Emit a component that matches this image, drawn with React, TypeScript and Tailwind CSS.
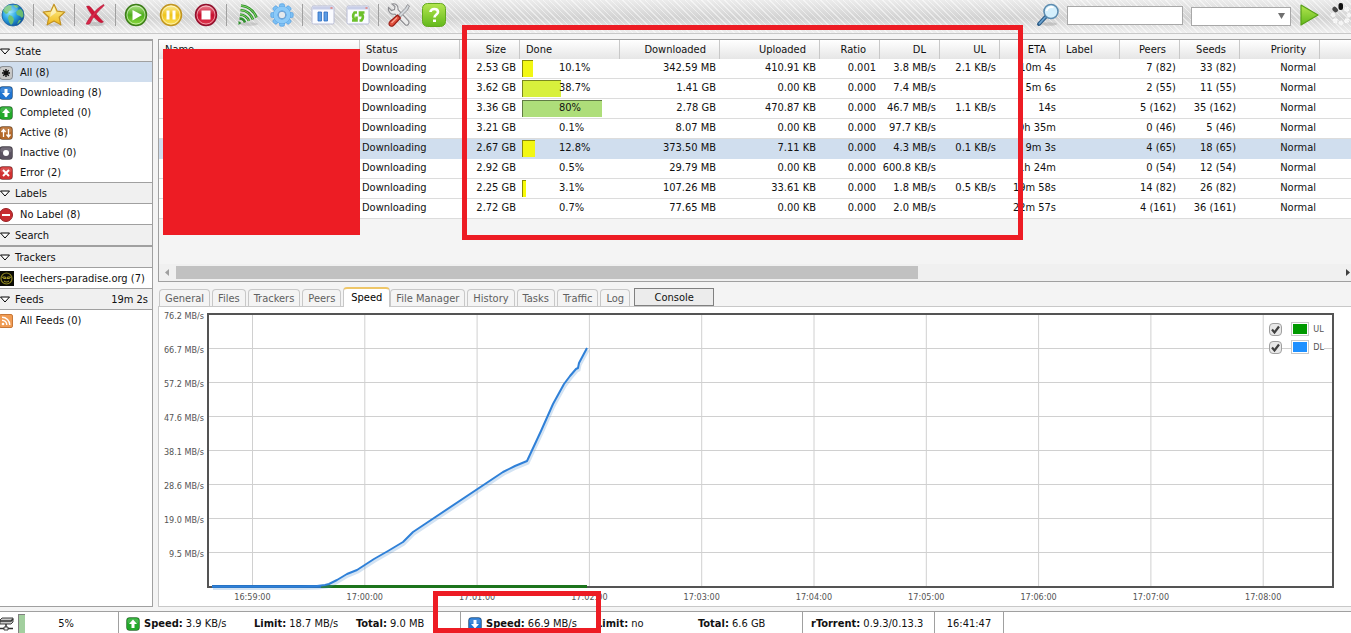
import type { ReactNode } from 'react'

type Torrent = {
  size: string
  done: number
  barColor: string
  downloaded: string
  uploaded: string
  ratio: string
  dl: string
  ul: string
  eta: string
  peers: string
  seeds: string
  selected?: boolean
}

const torrents: Torrent[] = [
  { size: '2.53 GB', done: 10.1, barColor: '#f2f713', downloaded: '342.59 MB', uploaded: '410.91 KB', ratio: '0.001', dl: '3.8 MB/s', ul: '2.1 KB/s', eta: '10m 4s', peers: '7 (82)', seeds: '33 (82)' },
  { size: '3.62 GB', done: 38.7, barColor: '#d8f03c', downloaded: '1.41 GB', uploaded: '0.00 KB', ratio: '0.000', dl: '7.4 MB/s', ul: '', eta: '5m 6s', peers: '2 (55)', seeds: '11 (55)' },
  { size: '3.36 GB', done: 80, barColor: '#aede7a', downloaded: '2.78 GB', uploaded: '470.87 KB', ratio: '0.000', dl: '46.7 MB/s', ul: '1.1 KB/s', eta: '14s', peers: '5 (162)', seeds: '35 (162)' },
  { size: '3.21 GB', done: 0.1, barColor: '#fbff00', downloaded: '8.07 MB', uploaded: '0.00 KB', ratio: '0.000', dl: '97.7 KB/s', ul: '', eta: '9h 35m', peers: '0 (46)', seeds: '5 (46)' },
  { size: '2.67 GB', done: 12.8, barColor: '#f2f713', downloaded: '373.50 MB', uploaded: '7.11 KB', ratio: '0.000', dl: '4.3 MB/s', ul: '0.1 KB/s', eta: '9m 3s', peers: '4 (65)', seeds: '18 (65)', selected: true },
  { size: '2.92 GB', done: 0.5, barColor: '#fbff00', downloaded: '29.79 MB', uploaded: '0.00 KB', ratio: '0.000', dl: '600.8 KB/s', ul: '', eta: '1h 24m', peers: '0 (54)', seeds: '12 (54)' },
  { size: '2.25 GB', done: 3.1, barColor: '#f8fb08', downloaded: '107.26 MB', uploaded: '33.61 KB', ratio: '0.000', dl: '1.8 MB/s', ul: '0.5 KB/s', eta: '19m 58s', peers: '14 (82)', seeds: '26 (82)' },
  { size: '2.72 GB', done: 0.7, barColor: '#fbff00', downloaded: '77.65 MB', uploaded: '0.00 KB', ratio: '0.000', dl: '2.0 MB/s', ul: '', eta: '22m 57s', peers: '4 (161)', seeds: '36 (161)' },
]

const columns = [
  { label: 'Name', width: 201, left: true },
  { label: 'Status', width: 100, left: true },
  { label: 'Size', width: 60 },
  { label: 'Done', width: 100, left: true },
  { label: 'Downloaded', width: 100 },
  { label: 'Uploaded', width: 100 },
  { label: 'Ratio', width: 60 },
  { label: 'DL', width: 60 },
  { label: 'UL', width: 60 },
  { label: 'ETA', width: 60 },
  { label: 'Label', width: 60, left: true },
  { label: 'Peers', width: 60 },
  { label: 'Seeds', width: 60 },
  { label: 'Priority', width: 80 },
  { label: '', width: 100 },
]

const tabs = ['General', 'Files', 'Trackers', 'Peers', 'Speed', 'File Manager', 'History', 'Tasks', 'Traffic', 'Log']

const yLabels = ['76.2 MB/s', '66.7 MB/s', '57.2 MB/s', '47.6 MB/s', '38.1 MB/s', '28.6 MB/s', '19.0 MB/s', '9.5 MB/s']
const xLabels = ['16:59:00', '17:00:00', '17:01:00', '17:02:00', '17:03:00', '17:04:00', '17:05:00', '17:06:00', '17:07:00', '17:08:00']

// plot units: 1123 wide, 271 high
const firstTick = 43.5
const tickStep = 112.3
const dlPoints =
  '3,271.5 91,271.5 108,271 116,270 120,269 128,265 138,259 148,255 165,244 179,236 194,227 204,217 216,209 294,157 306,151 318,146 332,116 344,89 355,69 361,61 367,54 369,53 370,48 378,33'

function Svg({ size = 24, children }: { size?: number; children: ReactNode }) {
  return (
    <svg width={size} height={size} viewBox={`0 0 ${size} ${size}`} fill="none" className="block shrink-0" aria-hidden="true">
      {children}
    </svg>
  )
}

function Gradients() {
  return (
    <svg width="0" height="0" className="absolute" aria-hidden="true">
      <defs>
        <radialGradient id="sea" cx="0.35" cy="0.4" r="0.7">
          <stop offset="0" stopColor="#8fe4fc" />
          <stop offset="0.45" stopColor="#2aa4e4" />
          <stop offset="1" stopColor="#0b4a94" />
        </radialGradient>
        <linearGradient id="gold" x1="0" y1="0" x2="0" y2="1">
          <stop offset="0" stopColor="#fff6a0" />
          <stop offset="1" stopColor="#f0b818" />
        </linearGradient>
        <linearGradient id="green" x1="0" y1="0" x2="0" y2="1">
          <stop offset="0" stopColor="#b8e890" />
          <stop offset="0.5" stopColor="#4fae1e" />
          <stop offset="1" stopColor="#8fdc40" />
        </linearGradient>
        <linearGradient id="amber" x1="0" y1="0" x2="0" y2="1">
          <stop offset="0" stopColor="#fdf0a0" />
          <stop offset="0.5" stopColor="#efc41c" />
          <stop offset="1" stopColor="#fbe45c" />
        </linearGradient>
        <linearGradient id="crimson" x1="0" y1="0" x2="0" y2="1">
          <stop offset="0" stopColor="#f0909c" />
          <stop offset="0.5" stopColor="#c80f30" />
          <stop offset="1" stopColor="#e03a50" />
        </linearGradient>
        <linearGradient id="lime" x1="0" y1="0" x2="0" y2="1">
          <stop offset="0" stopColor="#b4e650" />
          <stop offset="1" stopColor="#62b81c" />
        </linearGradient>
      </defs>
    </svg>
  )
}

function GlobeIcon() {
  return (
    <Svg>
      <circle cx="12" cy="12" r="11" fill="url(#sea)" stroke="#1c5f9c" strokeWidth="0.8" />
      <path d="M2 8c1-3 3-5 6-6l3 1-1 2 1 2-3 1-1 2-2 1zM12 2l4 0 2 2-3 1zM17 7l3-1 2 3 .5 4-1.500 2-2-2-3-1-1-3zM8 12l3 1 2 3-1 4-2 2-2-3-1-4zM18 17l2 0-2 3-2 1z" fill="#74c46c" opacity="0.9" />
      <ellipse cx="10" cy="6" rx="7" ry="4" fill="#fff" opacity="0.2" />
    </Svg>
  )
}

function StarIcon() {
  return (
    <Svg>
      <ellipse cx="12" cy="22" rx="9" ry="1.500" fill="#999" opacity="0.3" />
      <path d="M12 1.200l3.200 7 7.600.8-5.600 5.200 1.600 7.600L12 18l-6.800 3.800 1.600-7.600L1.200 9l7.600-.8z" fill="url(#gold)" stroke="#c39222" strokeWidth="1.200" strokeLinejoin="round" />
      <path d="M12 4l2.200 5.400L8 14l1-5z" fill="#fff" opacity="0.5" />
    </Svg>
  )
}

function DeleteIcon() {
  return (
    <Svg>
      <ellipse cx="13" cy="21" rx="9" ry="2" fill="#999" opacity="0.4" />
      <path d="M3.500 3.500c2-.8 3-.5 4 .5 4 5 8 10 13 15-2 1-3 .8-5-.5-5-4-9-9-12-15z" fill="#d0183a" stroke="#a81430" strokeWidth="0.5" />
      <path d="M20.500 1.500c.8.200.8 1 .3 1.500C15 8 10 14 7 20.500c-1.500 1-3 1-4 .5C7 13 13 6 20.500 1.500z" fill="#d8284a" stroke="#a81430" strokeWidth="0.5" />
    </Svg>
  )
}

function RoundIcon({ kind }: { kind: 'play' | 'pause' | 'stop' }) {
  const fill = { play: 'url(#green)', pause: 'url(#amber)', stop: 'url(#crimson)' }[kind]
  const ring = { play: '#3c7c18', pause: '#c09420', stop: '#90102c' }[kind]
  return (
    <Svg>
      <circle cx="12" cy="12" r="10.500" fill={fill} stroke={ring} strokeWidth="1.400" />
      <circle cx="12" cy="12" r="9" stroke="#fff" strokeOpacity="0.5" />
      {kind === 'play' && <path d="M8.500 7v10.500L18 12z" fill="#fff" />}
      {kind === 'pause' && <path d="M7.500 7.500h3v9h-3zM13.500 7.500h3v9h-3z" fill="#fff" />}
      {kind === 'stop' && <path d="M7.500 7.500h9v9h-9z" fill="#fff" />}
    </Svg>
  )
}

function FeedToolIcon() {
  return (
    <Svg>
      <ellipse cx="14" cy="21" rx="9" ry="1.800" fill="#999" opacity="0.35" />
      <g stroke="#2f8f2c" strokeWidth="2.600">
        <path d="M6 2.500A19 19 0 0 1 21.500 14.500" />
        <path d="M5.500 7A15 15 0 0 1 18 16.500" />
        <path d="M5 11.500A11 11 0 0 1 14 18" />
        <path d="M4.500 15.500A6 6 0 0 1 10 19.500" />
      </g>
      <g stroke="#8cdc6c" strokeWidth="0.900">
        <path d="M6 2.500A19 19 0 0 1 21.500 14.500" />
        <path d="M5.500 7A15 15 0 0 1 18 16.500" />
        <path d="M5 11.500A11 11 0 0 1 14 18" />
      </g>
      <path d="M3.500 18l3 2-3 2z" fill="#2f8f2c" />
    </Svg>
  )
}

function GearIcon() {
  const teeth = [0, 45, 90, 135, 180, 225, 270, 315]
  return (
    <Svg>
      {teeth.map((deg) => (
        <rect key={deg} x="9.500" y="0.800" width="5" height="6" rx="1.500" fill="#7cc0f4" stroke="#5ca4e4" strokeWidth="0.8" transform={`rotate(${deg} 12 12)`} />
      ))}
      <circle cx="12" cy="12" r="6.500" stroke="#5ca4e4" strokeWidth="5" />
      <circle cx="12" cy="12" r="6.500" stroke="#8ccaf8" strokeWidth="4" />
      <circle cx="12" cy="12" r="3.800" fill="#e4e8ec" stroke="#3c88d0" strokeWidth="0.8" />
    </Svg>
  )
}

function WindowIcon({ kind }: { kind: 'pause' | 'refresh' }) {
  return (
    <Svg>
      <rect x="1" y="3" width="22" height="18" rx="1.500" fill="#fafbff" stroke="#b8bcd4" />
      <path d="M1.500 3.500h21v3h-21z" fill="#c8cee8" />
      <path d="M19.500 4h2v2h-2z" fill="#e09090" />
      {kind === 'pause' ? (
        <path d="M7 9h3.500v9H7zM13 9h3.500v9H13z" fill="#5c9ce4" stroke="#2c6cc0" strokeWidth="0.8" />
      ) : (
        <g stroke="#6cc02c" strokeWidth="2.600">
          <path d="M11 9.500H8.500C6.500 12 6.500 14 8.500 17M6 17.500h4.500v-4" />
          <path d="M13.500 17.500h2c2-2.500 2-4.500 0-7M18.500 9.500H14v4" />
        </g>
      )}
    </Svg>
  )
}

function ToolsIcon() {
  return (
    <Svg>
      <path d="M1.500 4.500l3 3 3-1 .5-3L5 1c3-1 6.500 1 6 5.500L21.500 18c1.500 2.500-1 5-3 4L8 11C4.500 12 .5 9 1.500 4.500z" fill="#ececec" stroke="#8c8c90" strokeWidth="1.100" />
      <path d="M20.500 1.500L22.500 3l-2 4-7 7-2-2 7-7z" fill="#d4d8dc" stroke="#8c8c90" strokeWidth="0.9" />
      <path d="M10.500 12l3 3-7 7.500c-3 2-6-1-3.500-4z" fill="#e0503c" stroke="#981c14" strokeWidth="1.100" />
      <path d="M10 14.500l-5.500 5.500" stroke="#f8a898" strokeWidth="1.200" />
    </Svg>
  )
}

function HelpIcon() {
  return (
    <Svg>
      <rect x="0.500" y="0.500" width="23" height="23" rx="5" fill="url(#lime)" stroke="#64a820" />
      <path d="M8.500 9c0-4 7.500-4 7.500 0 0 2.500-3.500 2.500-3.500 5.500" stroke="#fff" strokeWidth="2.600" />
      <path d="M11 16.500h3v2.500h-3z" fill="#fff" />
    </Svg>
  )
}

function SearchIcon() {
  return (
    <Svg>
      <ellipse cx="13" cy="21" rx="8" ry="1.800" fill="#999" opacity="0.4" />
      <path d="M10 13.500L3 21" stroke="#2c5c88" strokeWidth="4" strokeLinecap="round" />
      <path d="M9 14.500L3.500 20.500" stroke="#6ca4d0" strokeWidth="1.800" strokeLinecap="round" />
      <circle cx="15" cy="8.500" r="7" fill="#d4effc" stroke="#5c8cb0" strokeWidth="1.600" />
      <path d="M10.500 8a5 5 0 0 1 7-3.500" stroke="#fff" strokeWidth="1.800" />
    </Svg>
  )
}

function Throbber() {
  const dots = [45, 90, 135, 180, 225, 270]
  return (
    <Svg>
      {dots.map((deg) => (
        <circle key={deg} cx="12" cy="4" r="2" fill="#f4f4f4" stroke="#fff" strokeDasharray="1.500 1" transform={`rotate(${deg} 12 12)`} />
      ))}
      <rect x="9.500" y="0" width="4.500" height="7" rx="2" fill="#111" />
      <rect x="9.500" y="1" width="4.500" height="6" rx="2" fill="#484848" transform="rotate(-45 12 12)" />
    </Svg>
  )
}

const toolbarGroups = [
  [{ label: 'Add torrent', icon: <GlobeIcon /> }],
  [{ label: 'Create torrent', icon: <StarIcon /> }],
  [{ label: 'Remove', icon: <DeleteIcon /> }],
  [
    { label: 'Start', icon: <RoundIcon kind="play" /> },
    { label: 'Pause', icon: <RoundIcon kind="pause" /> },
    { label: 'Stop', icon: <RoundIcon kind="stop" /> },
  ],
  [
    { label: 'RSS', icon: <FeedToolIcon /> },
    { label: 'Settings', icon: <GearIcon /> },
  ],
  [
    { label: 'Pause windows', icon: <WindowIcon kind="pause" /> },
    { label: 'Refresh windows', icon: <WindowIcon kind="refresh" /> },
  ],
  [
    { label: 'Tools', icon: <ToolsIcon /> },
    { label: 'Help', icon: <HelpIcon /> },
  ],
]

function Toolbar() {
  return (
    <header className="flex h-[34px] items-start justify-between overflow-hidden border-b border-[#c8c8c8] bg-[repeating-linear-gradient(45deg,transparent_0px,transparent_3px,#ffffff80_3px,#ffffff80_4px),linear-gradient(#ececec,#d2d2d2_55%,#f0f0f0)]">
      <div className="-ml-[5px] flex pt-[3px]">
        {toolbarGroups.map((group, i) => (
          <div key={group[0].label} className="flex">
            {i > 0 && (
              <div className="flex w-[6px] justify-center">
                <span className="mt-px h-[22px] w-px bg-[#a0a0a0]" />
              </div>
            )}
            {group.map((tool) => (
              <button key={tool.label} type="button" aria-label={tool.label} className="flex w-[35px] justify-center">
                {tool.icon}
              </button>
            ))}
          </div>
        ))}
      </div>
      <div className="-mr-[2px] flex shrink-0 pt-[3px]">
        <button type="button" aria-label="Search" className="mr-[7px]">
          <SearchIcon />
        </button>
        <input type="text" aria-label="Search text" className="mt-[3px] mr-2 h-[19px] w-[116px] border border-[#a8a8a8] bg-white px-1" />
        <div className="relative mt-1 mr-[6px] h-[19px]">
          <select aria-label="Search engine" className="block h-[19px] w-[100px] appearance-none border border-[#a8a8a8] bg-white px-1">
            <option value=""></option>
          </select>
          <svg width="7" height="6" className="pointer-events-none absolute top-[6px] right-[6px]" aria-hidden="true">
            <path d="M0 0h7L3.500 6z" fill="#707070" />
          </svg>
        </div>
        <button type="button" aria-label="Go" className="mr-2">
          <Svg>
            <path d="M4 2l17 10L4 22z" fill="url(#lime)" stroke="#58a018" strokeWidth="1.200" strokeLinejoin="round" />
          </Svg>
        </button>
        <Throbber />
      </div>
    </header>
  )
}

const badgeColors = {
  all: '#c4c4c4',
  down: '#1f74d0',
  up: '#22a82a',
  active: '#b4692a',
  inactive: '#5a5260',
  error: '#d03030',
}

function Badge({ kind }: { kind: keyof typeof badgeColors }) {
  return (
    <Svg size={14}>
      <rect x="0.500" y="0.500" width="13" height="13" rx="3" fill={badgeColors[kind]} stroke="#00000050" />
      <rect x="1.500" y="1.500" width="11" height="5" rx="2" fill="#fff" opacity="0.15" />
      {kind === 'all' && <path d="M7 3v8M3 7h8M4.200 4.200l5.600 5.600M9.800 4.200l-5.600 5.600" stroke="#111" strokeWidth="1.400" />}
      {kind === 'down' && <path d="M5.500 3h3v4H11l-4 4.500L3 7h2.500z" fill="#fff" />}
      {kind === 'up' && <path d="M5.500 11h3V7H11L7 2.500 3 7h2.500z" fill="#fff" />}
      {kind === 'active' && (
        <path d="M4.500 11V4M2.500 6l2-2.500L6.500 6M9.500 3v7.500M7.500 8.500l2 2.500 2-2.500" stroke="#fff" strokeWidth="1.300" />
      )}
      {kind === 'inactive' && <circle cx="7" cy="7" r="3" fill="#fff" />}
      {kind === 'error' && <path d="M4 4l6 6M10 4l-6 6" stroke="#fff" strokeWidth="2" />}
    </Svg>
  )
}

function NoLabelIcon() {
  return (
    <Svg size={14}>
      <circle cx="7" cy="7" r="6.500" fill="#c82c30" stroke="#982024" />
      <path d="M3 6h8v2H3z" fill="#fff" />
    </Svg>
  )
}

function TrackerIcon() {
  return (
    <Svg size={15}>
      <rect width="15" height="15" fill="#0c0c06" />
      <circle cx="7.500" cy="7.500" r="5.500" stroke="#8c8420" strokeWidth="1.200" />
      <path d="M3.500 6h3l.5 1.500H4.500zM11.500 6h-3L8 7.500h2.500zM5 10c1.500 1.300 3.500 1.300 5 0" stroke="#a89c28" />
    </Svg>
  )
}

function FeedIcon() {
  return (
    <Svg size={14}>
      <rect x="0.500" y="0.500" width="13" height="13" rx="1.500" fill="#f09c54" stroke="#c87838" />
      <circle cx="4" cy="10" r="1.300" fill="#fff" />
      <path d="M3 6.200a4.800 4.800 0 0 1 4.800 4.800M3 3.200A7.800 7.800 0 0 1 10.800 11" stroke="#fff" strokeWidth="1.400" />
    </Svg>
  )
}

const sidebar = [
  {
    title: 'State',
    items: [
      { icon: <Badge kind="all" />, label: 'All (8)', selected: true },
      { icon: <Badge kind="down" />, label: 'Downloading (8)' },
      { icon: <Badge kind="up" />, label: 'Completed (0)' },
      { icon: <Badge kind="active" />, label: 'Active (8)' },
      { icon: <Badge kind="inactive" />, label: 'Inactive (0)' },
      { icon: <Badge kind="error" />, label: 'Error (2)' },
    ],
  },
  { title: 'Labels', items: [{ icon: <NoLabelIcon />, label: 'No Label (8)' }] },
  { title: 'Search', items: [] },
  { title: 'Trackers', items: [{ icon: <TrackerIcon />, label: 'leechers-paradise.org (7)' }] },
  { title: 'Feeds', note: '19m 2s', items: [{ icon: <FeedIcon />, label: 'All Feeds (0)' }] },
]

function Sidebar() {
  return (
    <nav className="w-[153px] shrink-0 overflow-hidden border border-l-0 border-[#a0a0a0] bg-white">
      {sidebar.map((section) => (
        <section key={section.title}>
          <h2 className="flex h-[22px] items-center border-y border-[#a0a0a0] bg-[#f0f0f0] pt-px pr-1">
            <svg width="10" height="7" className="mr-[5px]" aria-hidden="true">
              <path d="M0.500 1h9L5 6z" fill="#fff" stroke="#000" />
            </svg>
            {section.title}
            {section.note && <span className="ml-auto">{section.note}</span>}
          </h2>
          <ul>
            {section.items.map((item) => (
              <li key={item.label} className={'selected' in item && item.selected ? 'flex h-5 items-center bg-[#d0deee] pt-px' : 'flex h-5 items-center pt-px'}>
                <span className="-ml-px w-[21px] shrink-0">{item.icon}</span>
                <span className="whitespace-nowrap">{item.label}</span>
              </li>
            ))}
          </ul>
        </section>
      ))}
    </nav>
  )
}

function TorrentTable() {
  return (
    <section className="flex h-[243px] shrink-0 flex-col overflow-hidden border-y border-l border-[#a0a0a0] bg-[#f4f4f4]">
      <div className="flex-1 overflow-hidden">
        <table className="w-[1261px] table-fixed border-separate border-spacing-0 whitespace-nowrap">
          <colgroup>
            {columns.map((col, i) => (
              <col key={i} style={{ width: col.width }} />
            ))}
          </colgroup>
          <thead>
            <tr className="h-[19px] bg-linear-to-b from-white to-[#e6e6e6]">
              {columns.map((col, i) => (
                <th
                  key={i}
                  className={
                    col.left
                      ? 'border-r border-[#c8c8c8] p-0 pt-px pl-[6px] text-left font-normal'
                      : 'border-r border-[#c8c8c8] p-0 pt-px pr-[13px] text-right font-normal'
                  }
                >
                  {col.label}
                </th>
              ))}
            </tr>
          </thead>
          <tbody className="text-right leading-[17px] [&_td]:h-5 [&_td]:border-b [&_td]:p-0 [&_td]:pr-1 [&_td]:align-top">
            {torrents.map((t) => (
              <tr key={t.size} className={t.selected ? 'bg-[#d0deee] [&_td]:border-[#d0deee]' : 'bg-white [&_td]:border-[#dcdcdc]'}>
                <td></td>
                <td className="text-left">
                  <span className="pl-[2px]">Downloading</span>
                </td>
                <td>{t.size}</td>
                <td className="relative text-left">
                  {t.done >= 1 && (
                    <span
                      className="absolute top-px left-[2px] h-[17px] border border-r-0 border-b-0 border-[#00000070]"
                      style={{ width: Math.ceil(t.done), backgroundColor: t.barColor }}
                    />
                  )}
                  <span className="relative pl-[39px]">{t.done}%</span>
                </td>
                <td>{t.downloaded}</td>
                <td>{t.uploaded}</td>
                <td>{t.ratio}</td>
                <td>{t.dl}</td>
                <td>{t.ul}</td>
                <td>{t.eta}</td>
                <td></td>
                <td>{t.peers}</td>
                <td>{t.seeds}</td>
                <td>Normal</td>
                <td></td>
              </tr>
            ))}
          </tbody>
        </table>
      </div>
      <div className="flex h-[17px] shrink-0 items-center bg-[#f0f0f0]">
        <svg width="17" height="9" aria-hidden="true">
          <path d="M10 1v7L6 4.500z" fill="#a0a0a0" />
        </svg>
        <div className="flex-1">
          <div className="h-[13px] w-[63.5%] bg-[#c1c1c1]" />
        </div>
        <svg width="7" height="9" aria-hidden="true">
          <path d="M2 1v7l4-3.500z" fill="#404040" />
        </svg>
      </div>
    </section>
  )
}

function TabBar() {
  return (
    <div className="flex h-[25px] items-end border-b border-[#c8c8c8] pl-px">
      {tabs.map((tab) =>
        tab === 'Speed' ? (
          <button
            key={tab}
            type="button"
            className="-mb-px h-5 rounded-t border border-t-2 border-b-0 border-[#c8c8c8] border-t-[#eec668] bg-white px-[7px] text-black"
          >
            {tab}
          </button>
        ) : (
          <button key={tab} type="button" className="mr-[2px] h-[17px] rounded-t border border-b-0 border-[#c8c8c8] px-[5px] pt-px text-[#606060]">
            {tab}
          </button>
        ),
      )}
      <button type="button" className="ml-[2px] h-[18px] w-20 border border-[#808080] bg-[#ececec] pt-px">
        Console
      </button>
    </div>
  )
}

function LegendItem({ id, label, swatch }: { id: string; label: string; swatch: ReactNode }) {
  return (
    <div className="flex h-[18px] items-center">
      <span className="relative mr-[9px] block size-[13px]">
        <input id={id} type="checkbox" defaultChecked className="peer block size-[13px] appearance-none rounded-sm border border-[#a0a0a0] bg-[#e8e8e8]" />
        <svg width="13" height="13" className="pointer-events-none absolute top-0 left-0 hidden peer-checked:block" aria-hidden="true">
          <path d="M3 6.500l2.500 3L10 3.500" stroke="#404040" strokeWidth="2.200" fill="none" />
        </svg>
      </span>
      <label htmlFor={id} className="flex items-center gap-1 bg-white">
        <span className="border border-[#c8c8c8] bg-white p-px">{swatch}</span>
        {label}
      </label>
    </div>
  )
}

function SpeedChart() {
  return (
    <section className="flex flex-1 flex-col border-b border-l border-[#c8c8c8] bg-white pt-[6px] pr-[17px] text-[9px] leading-3 text-[#545454]">
      <div className="flex flex-1">
        <div className="relative w-12 shrink-0">
          {yLabels.map((label, i) => (
            <span key={label} className="absolute right-[3px] -translate-y-1/2 whitespace-nowrap" style={{ top: `${1 + i * 12.4}%` }}>
              {label}
            </span>
          ))}
        </div>
        <div className="relative flex-1 border-2 border-[#545454]">
          <svg viewBox="0 0 1123 271" preserveAspectRatio="none" className="absolute inset-0 size-full overflow-visible" aria-hidden="true">
            {yLabels.slice(1).map((label, i) => (
              <path key={label} d={`M0 ${33.5 + i * 34}H1123`} stroke="#d0d0d0" />
            ))}
            {xLabels.map((label, i) => (
              <path key={label} d={`M${firstTick + i * tickStep} 0V271`} stroke="#d0d0d0" />
            ))}
            <path d="M105 271.500H378" stroke="#1c741c" strokeWidth="3" />
            <path d="M3 271.500H112" stroke="#1e68b4" strokeWidth="3" />
            <polyline points={dlPoints} transform="translate(1 2)" fill="none" stroke="#5090d0" strokeOpacity="0.25" strokeWidth="3" />
            <polyline points={dlPoints} fill="none" stroke="#2f80d8" strokeWidth="2" strokeLinejoin="round" />
          </svg>
          <div className="absolute top-[5px] right-[8px]">
            <LegendItem id="legend-ul" label="UL" swatch={<span className="block h-[10px] w-[14px] bg-[#009900]" />} />
            <LegendItem id="legend-dl" label="DL" swatch={<span className="block h-[10px] w-[14px] bg-[#1e90ff]" />} />
          </div>
        </div>
      </div>
      <div className="relative ml-[50px] h-[18px]">
        {xLabels.map((label, i) => (
          <span key={label} className="absolute top-[3px] -translate-x-1/2" style={{ left: `${((firstTick + i * tickStep) / 1125) * 100}%` }}>
            {label}
          </span>
        ))}
      </div>
    </section>
  )
}

function Stat({ label, value, className }: { label: string; value: string; className?: string }) {
  return (
    <span className={className}>
      <b>{label}:</b> {value}
    </span>
  )
}

function StatusBar() {
  return (
    <footer className="flex h-[22px] shrink-0 overflow-hidden border-t border-[#a0a0a0] bg-white leading-[24px] whitespace-nowrap">
      <div className="flex w-[119px] shrink-0 border-r border-[#a0a0a0]">
        <svg width="18" height="22" fill="none" aria-hidden="true">
          <path d="M0 8l2-2h11v4l-2 2H0z" fill="#c8c8c8" stroke="#404040" />
          <path d="M0 9h11l2-2M6 12v4M0 16.500h13" stroke="#303030" strokeWidth="1.500" />
          <path d="M4 15h4v3H4z" fill="#f4f4f4" stroke="#404040" />
        </svg>
        <div className="relative flex-1 pr-1 text-center">
          <span className="absolute top-[2px] left-0 h-5 w-[7px] border border-r-0 border-[#808080] bg-[#a2cf9e]" />
          5%
        </div>
      </div>
      <div className="flex w-[342px] shrink-0 border-r border-[#a0a0a0] pl-[7px]">
        <span className="mt-[5px] mr-1">
          <Badge kind="up" />
        </span>
        <Stat label="Speed" value="3.9 KB/s" className="w-[110px]" />
        <Stat label="Limit" value="18.7 MB/s" className="w-[102px]" />
        <Stat label="Total" value="9.0 MB" />
      </div>
      <div className="flex w-[342px] shrink-0 border-r border-[#a0a0a0] pl-[7px]">
        <span className="mt-[5px] mr-1">
          <Badge kind="down" />
        </span>
        <Stat label="Speed" value="66.9 MB/s" className="w-[110px]" />
        <Stat label="Limit" value="no" className="w-[102px]" />
        <Stat label="Total" value="6.6 GB" />
      </div>
      <div className="w-[132px] shrink-0 border-r border-[#a0a0a0] pl-2">
        <Stat label="rTorrent" value="0.9.3/0.13.3" />
      </div>
      <div className="w-[69px] shrink-0 border-r border-[#a0a0a0] text-center">16:41:47</div>
    </footer>
  )
}

// red marker shapes drawn on top of the client
function Markers() {
  return (
    <div className="pointer-events-none">
      <div className="absolute top-[49px] left-[163px] h-[186px] w-[197px] bg-[#ed1c24]" />
      <div className="absolute top-[25px] left-[462px] h-[215px] w-[561px] border-5 border-[#ed1c24]" />
      <div className="absolute top-[591px] left-[433px] h-[42px] w-[168px] border-5 border-[#ed1c24]" />
    </div>
  )
}

export default function App() {
  return (
    <div className="relative flex h-screen flex-col overflow-hidden bg-[#f4f4f4] font-['DejaVu_Sans_Condensed','DejaVu_Sans',sans-serif] text-[11px] leading-4 text-[#111]">
      <Gradients />
      <Toolbar />
      <div className="flex min-h-0 flex-1 gap-[5px] pt-[5px] pb-1">
        <Sidebar />
        <main className="flex min-w-0 flex-1 flex-col">
          <TorrentTable />
          <TabBar />
          <SpeedChart />
        </main>
      </div>
      <StatusBar />
      <Markers />
    </div>
  )
}
